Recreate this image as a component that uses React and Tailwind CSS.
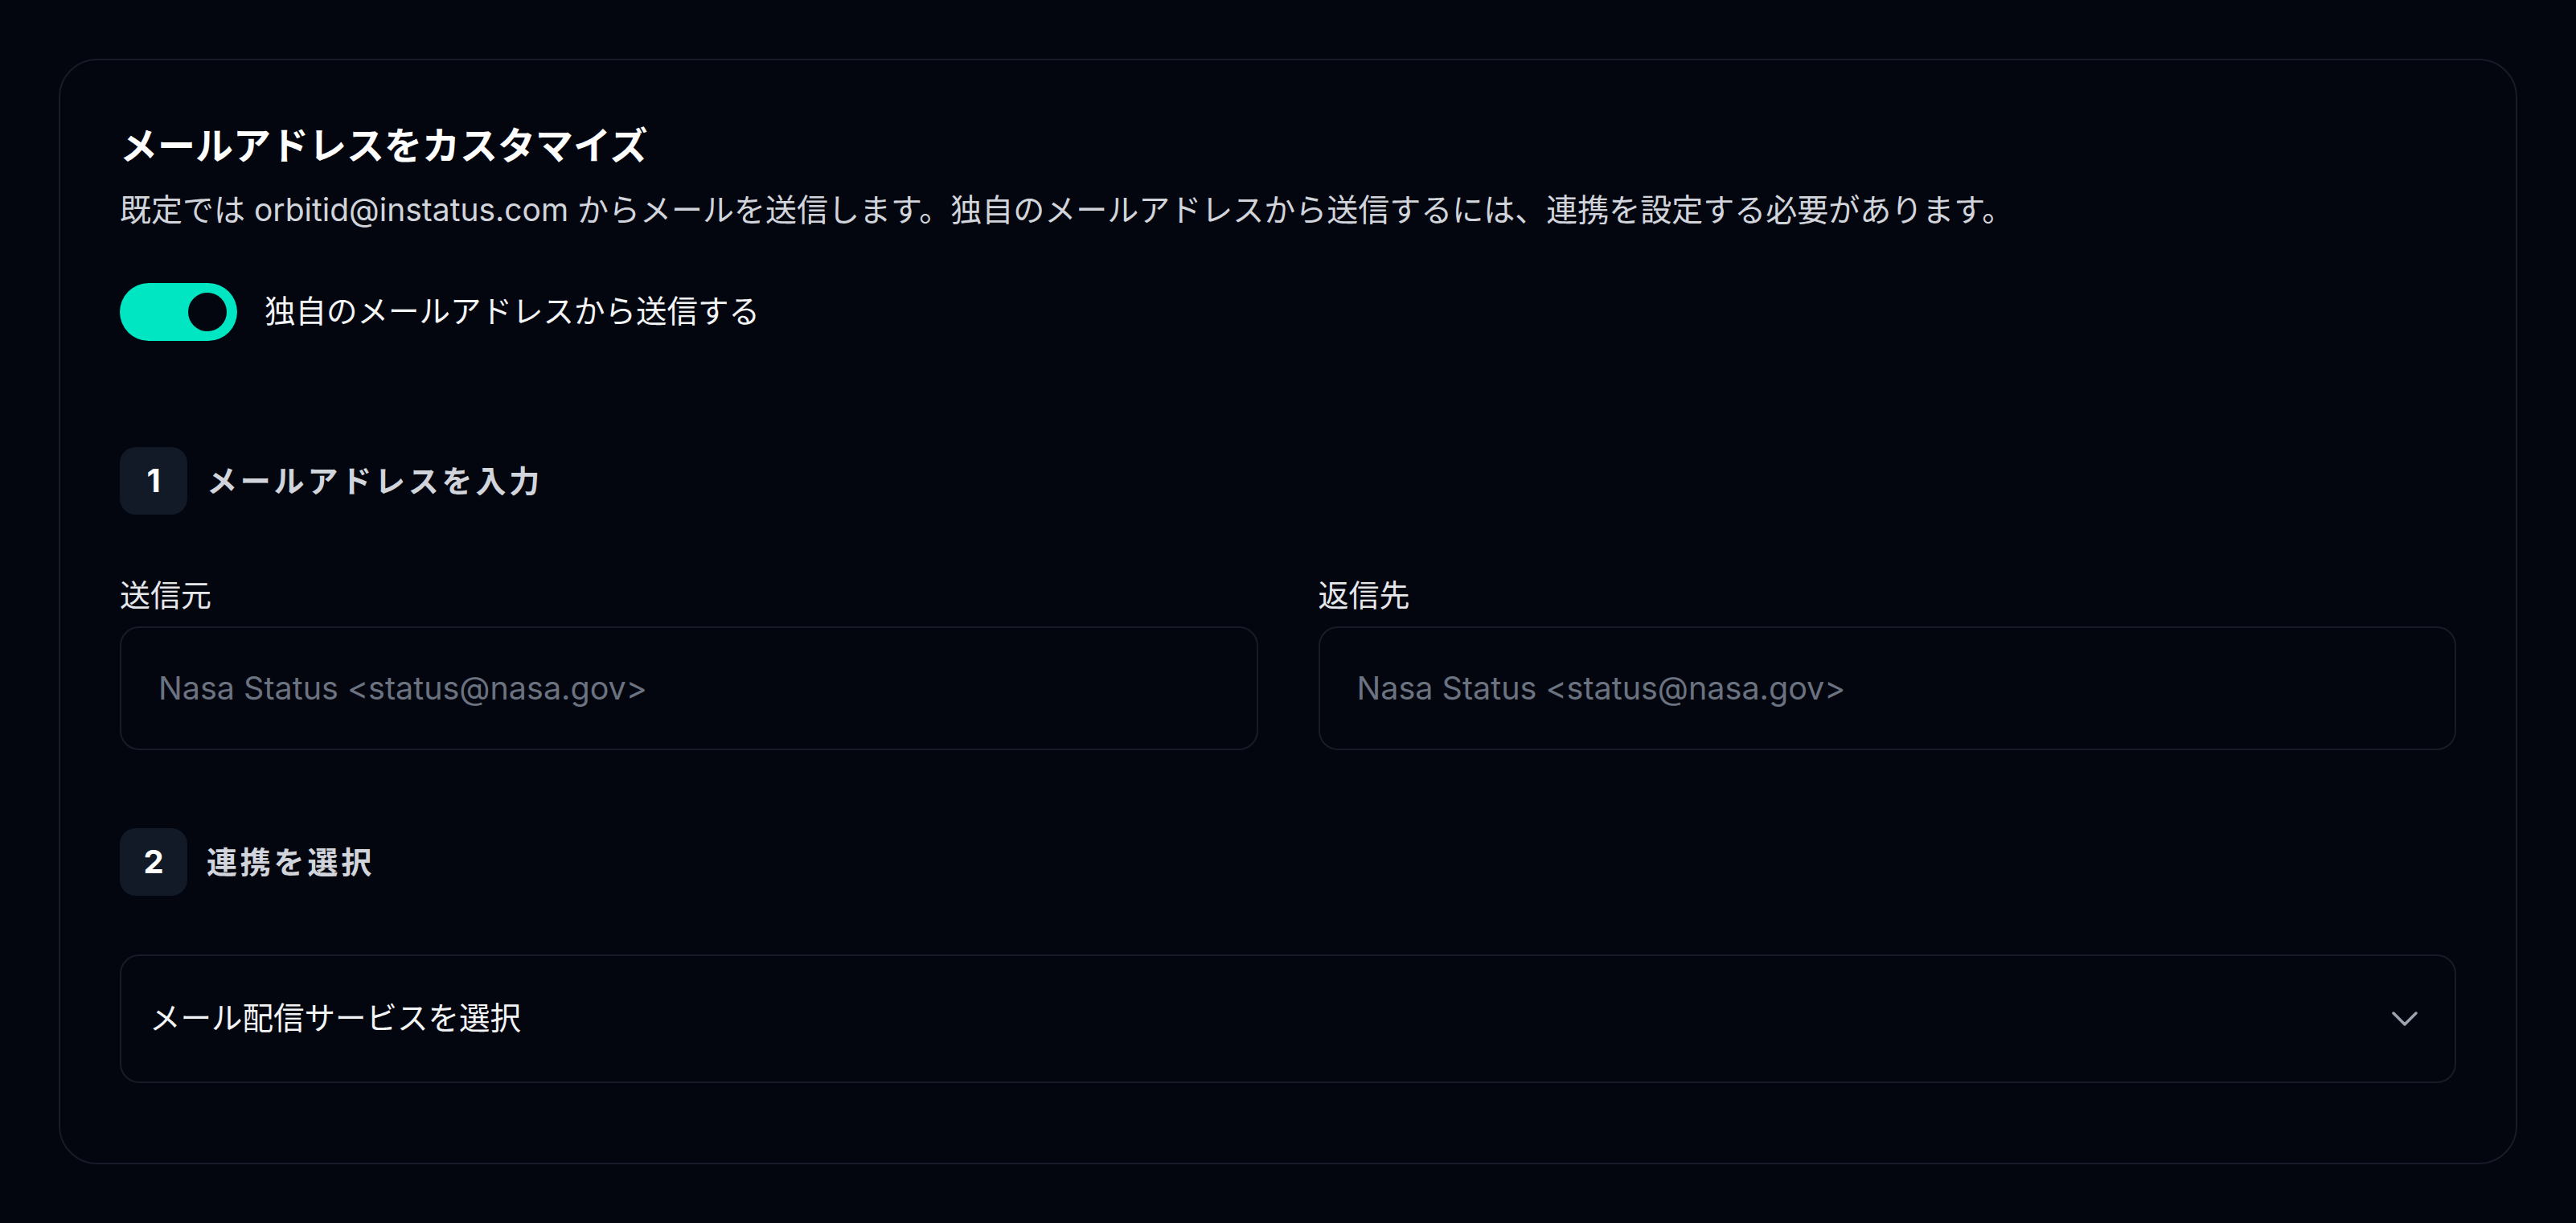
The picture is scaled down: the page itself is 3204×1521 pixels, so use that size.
import React, { useState } from "react";

const font = { fontFamily: "Inter, 'Noto Sans CJK JP', sans-serif" };

const StepHeader = ({ num, title }) => (
  <div className="flex items-center gap-[24px]">
    <div className="w-[84px] h-[84px] rounded-[20px] bg-[#131a27] flex items-center justify-center text-[40px] font-bold text-white">
      {num}
    </div>
    <h3 className="text-[38px] font-bold tracking-[0.1em] text-[#d1d5db]">
      {title}
    </h3>
  </div>
);

const Field = ({ label, placeholder }) => (
  <div className="flex flex-col">
    <label className="text-[38px] leading-[48px] text-[#e5e7eb]">{label}</label>
    <input
      placeholder={placeholder}
      className="mt-[15px] h-[154px] w-full rounded-[24px] border-2 border-[#171c28] bg-transparent px-[46px] text-[39.5px] text-white placeholder:text-[#6b7280] outline-none"
    />
  </div>
);

export default function App() {
  const [enabled, setEnabled] = useState(true);

  return (
    <div className="min-h-screen bg-[#03060f] px-[73px] pt-[73px] pb-[70px]" style={font}>
      <div className="rounded-[48px] border-2 border-[#171c28] px-[74px] pt-[74px] pb-[99px]">
        {/* heading */}
        <h2 className="text-[47px] leading-[64px] font-bold text-white">
          メールアドレスをカスタマイズ
        </h2>
        <p className="mt-[20px] text-[39px] leading-[56px] text-[#d1d5db]">
          既定では orbitid@instatus.com からメールを送信します。独自のメールアドレスから送信するには、連携を設定する必要があります。
        </p>

        {/* toggle */}
        <div className="mt-[63px] flex items-center gap-[34px]">
          <button
            onClick={() => setEnabled(!enabled)}
            className={`w-[146px] h-[72px] rounded-full flex items-center px-[13px] ${
              enabled ? "bg-[#00e5c2] justify-end" : "bg-[#1f2937] justify-start"
            }`}
          >
            <span className="block w-[48px] h-[48px] rounded-full bg-[#03060f]" />
          </button>
          <span className="text-[38.5px] text-[#f3f4f6]">独自のメールアドレスから送信する</span>
        </div>

        {/* step 1 */}
        <div className="mt-[132px]">
          <StepHeader num="1" title="メールアドレスを入力" />
        </div>
        <div className="mt-[76px] grid grid-cols-2 gap-[75px]">
          <Field label="送信元" placeholder="Nasa Status <status@nasa.gov>" />
          <Field label="返信先" placeholder="Nasa Status <status@nasa.gov>" />
        </div>

        {/* step 2 */}
        <div className="mt-[97px]">
          <StepHeader num="2" title="連携を選択" />
        </div>
        <button className="mt-[73px] h-[160px] w-full rounded-[24px] border-2 border-[#171c28] flex items-center justify-between pl-[35px] pr-[46px]">
          <span className="text-[38.5px] text-[#f3f4f6]">メール配信サービスを選択</span>
          <svg width="32" height="18" viewBox="0 0 32 18" fill="none">
            <polyline
              points="2,2 16,16 30,2"
              stroke="#9ca3af"
              strokeWidth="3.5"
              strokeLinecap="round"
              strokeLinejoin="round"
            />
          </svg>
        </button>
      </div>
    </div>
  );
}
